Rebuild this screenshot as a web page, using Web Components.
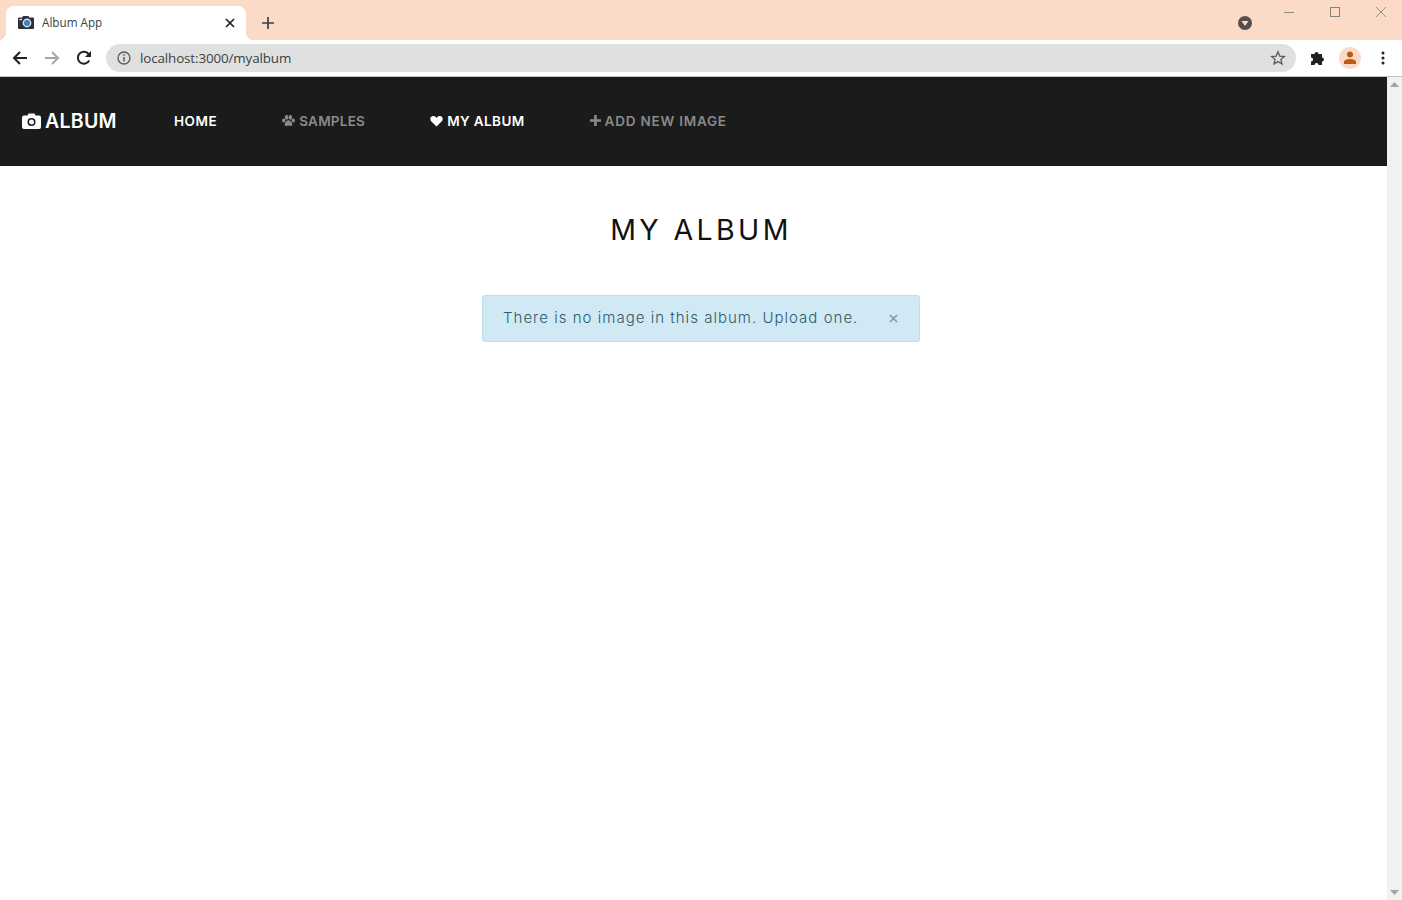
<!DOCTYPE html>
<html>
<head>
<meta charset="utf-8">
<title>Album App</title>
<style>
  html, body { margin: 0; height: 100%; overflow: hidden; background: #fff; }
  body { display: flex; flex-direction: column; height: 900px; }
  .page { flex: 1; display: flex; min-height: 0; }
  .content { flex: 1; min-width: 0; display: flex; flex-direction: column; }
</style>
</head>
<body>
<c-tabstrip title-text="Album App"></c-tabstrip>
<c-toolbar url="localhost:3000/myalbum"></c-toolbar>
<div class="page">
  <div class="content">
    <c-navbar>
      <c-navlink active style="--spacing:.55px">HOME</c-navlink>
      <c-navlink icon="paw" style="--spacing:.25px">SAMPLES</c-navlink>
      <c-navlink icon="heart" active style="--spacing:.4px">MY ALBUM</c-navlink>
      <c-navlink icon="plus" style="--spacing:.78px">ADD NEW IMAGE</c-navlink>
    </c-navbar>
    <c-album-view heading="MY ALBUM">
      <c-alert>There is no image in this album. Upload one.</c-alert>
    </c-album-view>
  </div>
  <c-scrollbar></c-scrollbar>
</div>

<script>
const NAV_ICONS = {
  paw: `<svg width="13" height="12" viewBox="0 0 13 12" fill="currentColor"><ellipse cx="1.7" cy="5.4" rx="1.7" ry="2"/><ellipse cx="4.6" cy="2.4" rx="1.800" ry="2.300"/><ellipse cx="8.4" cy="2.4" rx="1.800" ry="2.300"/><ellipse cx="11.300" cy="5.4" rx="1.7" ry="2"/><path d="M6.5 5.2c-1.8 0-3.8 2.400-3.800 4.300 0 1 .8 1.500 1.700 1.500 .8 0 1.400-.4 2.100-.4s1.300.4 2.100.4c.9 0 1.700-.5 1.700-1.500 0-1.900-2-4.300-3.800-4.300z"/></svg>`,
  heart: `<svg width="13" height="12" viewBox="0 0 13 12" fill="currentColor"><path d="M6.500 11.500L1.200 6.200C-.3 4.700 0 1.100 3.200 1c1.500 0 2.600.9 3.300 1.900C7.200 1.900 8.300 1 9.800 1c3.200.1 3.500 3.700 2 5.200z"/></svg>`,
  plus: `<svg width="11" height="11" viewBox="0 0 11 11" fill="currentColor"><path d="M4.200 0h2.600v4.200H11v2.600H6.800V11H4.200V6.800H0V4.200h4.200z"/></svg>`
};

class CTabstrip extends HTMLElement {
  constructor() {
    super();
    this.attachShadow({ mode: 'open' });
    this.shadowRoot.innerHTML = `
    <style>
      :host { display: flex; height: 40px; background: #fcdac8; padding-left: 6px; box-sizing: border-box; flex: none; }
      .tab { position: relative; width: 240px; margin-top: 6px; height: 34px; background: #fff; border-radius: 8px 8px 0 0;
             display: flex; align-items: center; box-sizing: border-box; padding: 0 10px 0 12px; }
      .tab::before, .tab::after { content: ""; position: absolute; bottom: 0; width: 8px; height: 8px; }
      .tab::before { left: -8px; background: radial-gradient(circle at 0 0, transparent 8px, #fff 8.500px); }
      .tab::after { right: -8px; background: radial-gradient(circle at 100% 0, transparent 8px, #fff 8.500px); }
      .title { font: 11.700px "Open Sans", sans-serif; color: #3c4043; margin: 0 0 2px 8px; flex: 1; }
      .close { width: 12px; height: 12px; }
      .new { margin: 16px 0 0 15px; width: 14px; height: 14px; }
      .spacer { flex: 1; }
      .drop { margin: 16px 0 0; width: 14px; height: 14px; }
      .win { display: flex; margin: 0 0 0 30px; padding-right: 14px; }
      .win svg { display: block; margin-top: 5px; width: 14px; height: 14px; }
      .win svg + svg { margin-left: 32px; }
    </style>
    <div class="tab">
      <svg width="16" height="14" viewBox="0 0 16 14"><path d="M1 1.500h3.200L5 0h5.500l.8 1.500H15a1 1 0 0 1 1 1V12a1 1 0 0 1-1 1H1a1 1 0 0 1-1-1V2.500a1 1 0 0 1 1-1z" fill="#2c3140"/><circle cx="9" cy="7" r="4.400" fill="#dfe3e8"/><circle cx="9" cy="7" r="3" fill="#3f7fc4"/><rect x="1.500" y="2.800" width="2.500" height="1.500" fill="#dfe3e8"/></svg>
      <span class="title"></span>
      <svg class="close" viewBox="0 0 12 12"><path d="M2 2l8 8M10 2l-8 8" stroke="#202124" stroke-width="1.700" fill="none"/></svg>
    </div>
    <svg class="new" viewBox="0 0 14 14"><path d="M7 1v12M1 7h12" stroke="#3c4043" stroke-width="1.700" fill="none"/></svg>
    <div class="spacer"></div>
    <svg class="drop" viewBox="0 0 14 14"><circle cx="7" cy="7" r="7" fill="#544f4c"/><path d="M3.500 5h7L7 10z" fill="#fcdac8"/></svg>
    <div class="win">
      <svg viewBox="0 0 14 14"><path d="M2 7.500h10" stroke="#8f8a85" fill="none"/></svg>
      <svg viewBox="0 0 14 14"><rect x="2.500" y="2.500" width="9" height="9" stroke="#85817d" fill="none"/></svg>
      <svg viewBox="0 0 14 14"><path d="M2 2l10 10M12 2L2 12" stroke="#8f9a85" fill="none"/></svg>
    </div>`;
    this.shadowRoot.querySelector('.title').textContent = this.getAttribute('title-text');
  }
}
customElements.define('c-tabstrip', CTabstrip);

class CToolbar extends HTMLElement {
  constructor() {
    super();
    this.attachShadow({ mode: 'open' });
    this.shadowRoot.innerHTML = `
    <style>
      :host { display: flex; align-items: center; height: 37px; background: #fff; box-sizing: border-box;
              border-bottom: 1px solid #c4c4c4; padding: 0 0 1px 12px; flex: none; }
      svg { display: block; flex: none; }
      .nav { display: flex; gap: 16px; }
      .omni { flex: 1; margin: 0 14px 0 14px; height: 28px; background: #dfe1e1; border-radius: 14px; display: flex;
              align-items: center; padding: 0 10px 0 11px; }
      .url { font: 13.400px "Open Sans", sans-serif; color: #3b3f42; margin-left: 9px; flex: 1; letter-spacing: -.12px; }
      .ava { width: 22px; height: 22px; border-radius: 50%; background: #fcdac8; display: flex; align-items: center; justify-content: center; margin-left: 13px; }
      .dots { margin: 0 17px 0 20px; }
    </style>
    <div class="nav">
      <svg width="16" height="16" viewBox="0 0 16 16"><path d="M15 8H2M8 2L2 8l6 6" stroke="#202124" stroke-width="2" fill="none"/></svg>
      <svg width="16" height="16" viewBox="0 0 16 16"><path d="M1 8h13M8 2l6 6-6 6" stroke="#a6a6a6" stroke-width="2" fill="none"/></svg>
      <svg width="16" height="16" viewBox="0 0 16 16"><path d="M13.200 10.500A6 6 0 1 1 13 4.600" stroke="#202124" stroke-width="2" fill="none"/><path d="M15 1v6H9z" fill="#202124"/></svg>
    </div>
    <div class="omni">
      <svg width="14" height="14" viewBox="0 0 14 14"><circle cx="7" cy="7" r="6" stroke="#5f5a57" stroke-width="1.300" fill="none"/><path d="M7 6v4.500M7 3.300v1.500" stroke="#5f5a57" stroke-width="1.500"/></svg>
      <span class="url"></span>
      <svg width="16" height="16" viewBox="0 0 16 16"><path d="M8 1.800l1.800 4.300 4.600.4-3.500 3 1.100 4.500L8 11.600 4 14l1.100-4.500-3.500-3 4.600-.4z" stroke="#5f5a57" stroke-width="1.300" fill="none"/></svg>
    </div>
    <svg width="16" height="16" viewBox="0 0 16 16"><path d="M1 4h3.500a2 2 0 1 1 4 0H12v3.500a2 2 0 1 1 0 4V15H8.500a2 2 0 1 0-4 0H1v-3.500a2 2 0 1 0 0-4z" fill="#202124"/></svg>
    <div class="ava"><svg width="14" height="14" viewBox="0 0 14 14" fill="#bf5b16"><circle cx="7" cy="3.500" r="3"/><path d="M1 13v-2c0-2 3-3 6-3s6 1 6 3v2z"/></svg></div>
    <svg class="dots" width="4" height="14" viewBox="0 0 4 14" fill="#202124"><circle cx="2" cy="2" r="1.500"/><circle cx="2" cy="7" r="1.500"/><circle cx="2" cy="12" r="1.500"/></svg>`;
    this.shadowRoot.querySelector('.url').textContent = this.getAttribute('url');
  }
}
customElements.define('c-toolbar', CToolbar);

class CNavbar extends HTMLElement {
  constructor() {
    super();
    this.attachShadow({ mode: 'open' });
    this.shadowRoot.innerHTML = `
    <style>
      :host { display: flex; align-items: center; height: 89px; box-sizing: border-box; background: #1b1b1b; padding: 0 0 2px 22px; flex: none; }
      .brand { display: flex; align-items: center; gap: 4px; color: #fff; font: 600 19.500px Inter, sans-serif; margin-right: 57px; letter-spacing: .3px; }
      svg { display: block; }
      .links { display: flex; gap: 65px; }
    </style>
    <div class="brand">
      <svg width="19" height="16" viewBox="0 0 19 16"><path fill-rule="evenodd" fill="#fff" d="M2 2.500h3.500L6.500 .5h6l1 2H17a2 2 0 0 1 2 2V14a2 2 0 0 1-2 2H2a2 2 0 0 1-2-2V4.500a2 2 0 0 1 2-2zM9.500 5a4 4 0 1 0 0 8 4 4 0 0 0 0-8zm0 1.500a2.500 2.500 0 1 1 0 5 2.500 2.500 0 0 1 0-5z"/></svg>
      <span>ALBUM</span>
    </div>
    <div class="links"><slot></slot></div>`;
  }
}
customElements.define('c-navbar', CNavbar);

class CNavlink extends HTMLElement {
  constructor() {
    super();
    this.attachShadow({ mode: 'open' });
    const icon = NAV_ICONS[this.getAttribute('icon')] || '';
    this.shadowRoot.innerHTML = `
    <style>
      :host { display: flex; align-items: center; gap: 4px; color: #8a8a8a; font: 600 13.500px Inter, sans-serif; letter-spacing: var(--spacing, .3px); }
      :host([active]) { color: #fff; }
      svg { display: block; }
    </style>
    ${icon}<slot></slot>`;
  }
}
customElements.define('c-navlink', CNavlink);

class CAlbumView extends HTMLElement {
  constructor() {
    super();
    this.attachShadow({ mode: 'open' });
    this.shadowRoot.innerHTML = `
    <style>
      :host { display: flex; flex-direction: column; align-items: center; padding: 46px 0 0 15px; }
      h1 { margin: 0 0 47px; font: 400 28.500px/36px Inter, sans-serif; letter-spacing: 3.400px; color: #111; }
    </style>
    <h1></h1>
    <slot></slot>`;
    this.shadowRoot.querySelector('h1').textContent = this.getAttribute('heading');
  }
}
customElements.define('c-album-view', CAlbumView);

class CAlert extends HTMLElement {
  constructor() {
    super();
    this.attachShadow({ mode: 'open' });
    this.shadowRoot.innerHTML = `
    <style>
      :host { display: flex; align-items: center; justify-content: space-between; box-sizing: border-box; width: 438px; height: 47px;
              padding: 0 21px 0 20px; background: #d1e9f4; border: 1px solid #bedfee; border-radius: 3px;
              color: #2f5a6e; font: 300 15px Inter, sans-serif; letter-spacing: 1.02px; }
      span { padding-bottom: 2px; }
      svg { display: block; }
    </style>
    <span><slot></slot></span>
    <svg width="9" height="9" viewBox="0 0 9 9"><path d="M1 1l7 7M8 1L1 8" stroke="#7a9bad" stroke-width="1.600" fill="none"/></svg>`;
  }
}
customElements.define('c-alert', CAlert);

class CScrollbar extends HTMLElement {
  constructor() {
    super();
    this.attachShadow({ mode: 'open' });
    this.shadowRoot.innerHTML = `
    <style>
      :host { display: flex; flex-direction: column; justify-content: space-between; align-items: center; width: 15px; background: #f1f1f1; padding: 5px 0; box-sizing: border-box; flex: none; }
      svg { display: block; }
    </style>
    <svg width="9" height="5" viewBox="0 0 9 5"><path d="M4.500 0L9 5H0z" fill="#a3a3a3"/></svg>
    <svg width="9" height="5" viewBox="0 0 9 5"><path d="M0 0h9L4.500 5z" fill="#a3a3a3"/></svg>`;
  }
}
customElements.define('c-scrollbar', CScrollbar);
</script>
</body>
</html>
